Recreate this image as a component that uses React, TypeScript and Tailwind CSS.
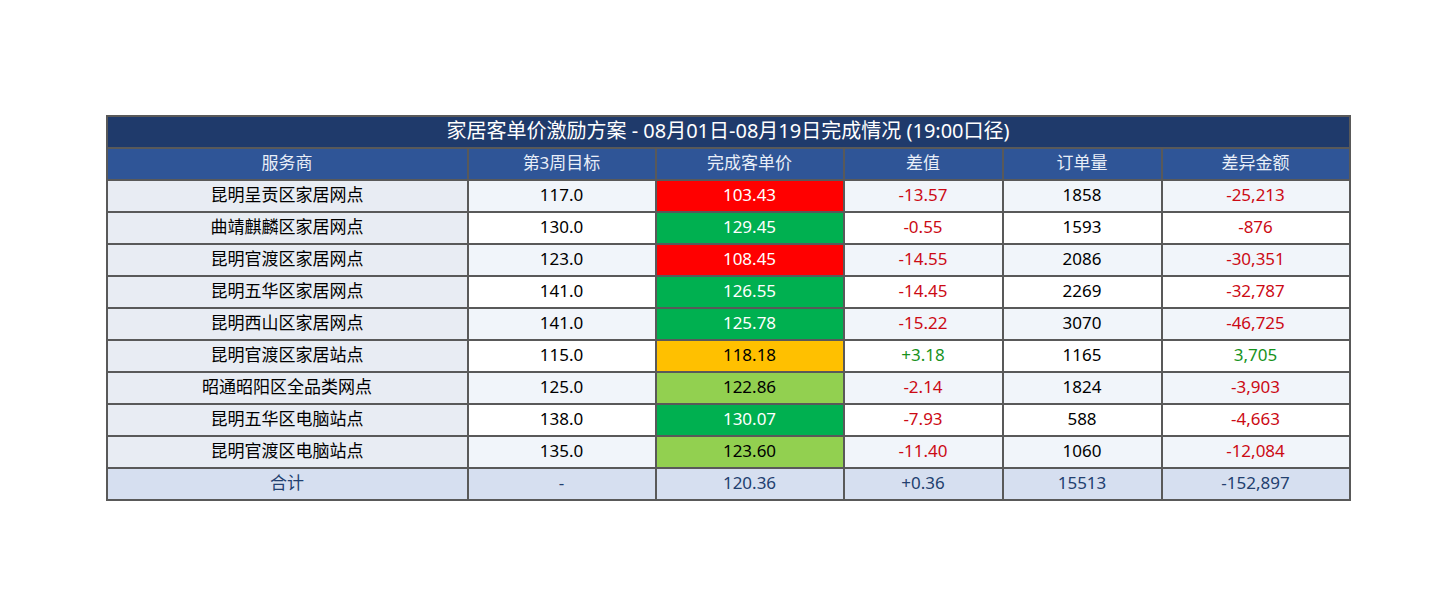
import React from 'react'

type Row = {
  name: string
  target: string
  price: string
  fill: string
  dark?: boolean
  diff: string
  orders: string
  amount: string
}

const rows: Row[] = [
  { name: '昆明呈贡区家居网点', target: '117.0', price: '103.43', fill: 'bg-[#ff0000]', diff: '-13.57', orders: '1858', amount: '-25,213' },
  { name: '曲靖麒麟区家居网点', target: '130.0', price: '129.45', fill: 'bg-[#00b050]', diff: '-0.55', orders: '1593', amount: '-876' },
  { name: '昆明官渡区家居网点', target: '123.0', price: '108.45', fill: 'bg-[#ff0000]', diff: '-14.55', orders: '2086', amount: '-30,351' },
  { name: '昆明五华区家居网点', target: '141.0', price: '126.55', fill: 'bg-[#00b050]', diff: '-14.45', orders: '2269', amount: '-32,787' },
  { name: '昆明西山区家居网点', target: '141.0', price: '125.78', fill: 'bg-[#00b050]', diff: '-15.22', orders: '3070', amount: '-46,725' },
  { name: '昆明官渡区家居站点', target: '115.0', price: '118.18', fill: 'bg-[#ffc000]', dark: true, diff: '+3.18', orders: '1165', amount: '3,705' },
  { name: '昭通昭阳区全品类网点', target: '125.0', price: '122.86', fill: 'bg-[#92d050]', dark: true, diff: '-2.14', orders: '1824', amount: '-3,903' },
  { name: '昆明五华区电脑站点', target: '138.0', price: '130.07', fill: 'bg-[#00b050]', diff: '-7.93', orders: '588', amount: '-4,663' },
  { name: '昆明官渡区电脑站点', target: '135.0', price: '123.60', fill: 'bg-[#92d050]', dark: true, diff: '-11.40', orders: '1060', amount: '-12,084' },
]

const cols = 'grid grid-cols-[359px_186px_186px_157px_157px_186px] gap-x-[2px]'
const cell = 'flex h-[30px] items-center justify-center pb-[3px]'

export default function App() {
  return (
    <div
      className="flex h-[616px] w-[1456px] items-center justify-center bg-white text-[17px]"
      style={{ fontFamily: '"Noto Sans", "Noto Sans CJK SC", sans-serif' }}
    >
      <div className="flex w-[1245px] flex-col gap-y-[2px] bg-[#595959] p-[2px]">
        <div className={`${cell} bg-[#1f3a6b] text-[20px] text-white`}>
          家居客单价激励方案 - 08月01日-08月19日完成情况 (19:00口径)
        </div>
        <div className={cols}>
          {['服务商', '第3周目标', '完成客单价', '差值', '订单量', '差异金额'].map((h) => (
            <div key={h} className={`${cell} bg-[#2f5597] text-[#e8eef8]`}>
              {h}
            </div>
          ))}
        </div>
        {rows.map((r, i) => {
          const bg = i % 2 === 0 ? 'bg-[#f1f5fa]' : 'bg-white'
          const diffColor = r.diff.startsWith('+') ? 'text-[#17921c]' : 'text-[#cc0a14]'
          const amtColor = r.amount.startsWith('-') ? 'text-[#cc0a14]' : 'text-[#17921c]'
          return (
            <div key={r.name} className={cols}>
              <div className={`${cell} bg-[#e8ecf3] text-black`}>{r.name}</div>
              <div className={`${cell} ${bg} text-black`}>{r.target}</div>
              <div className={`${cell} ${r.fill} ${r.dark ? 'text-black' : 'text-white'}`}>{r.price}</div>
              <div className={`${cell} ${bg} ${diffColor}`}>{r.diff}</div>
              <div className={`${cell} ${bg} text-black`}>{r.orders}</div>
              <div className={`${cell} ${bg} ${amtColor}`}>{r.amount}</div>
            </div>
          )
        })}
        <div className={cols}>
          {['合计', '-', '120.36', '+0.36', '15513', '-152,897'].map((t, i) => (
            <div key={i} className={`${cell} bg-[#d6dff0] text-[#22406f]`}>
              {t}
            </div>
          ))}
        </div>
      </div>
    </div>
  )
}
